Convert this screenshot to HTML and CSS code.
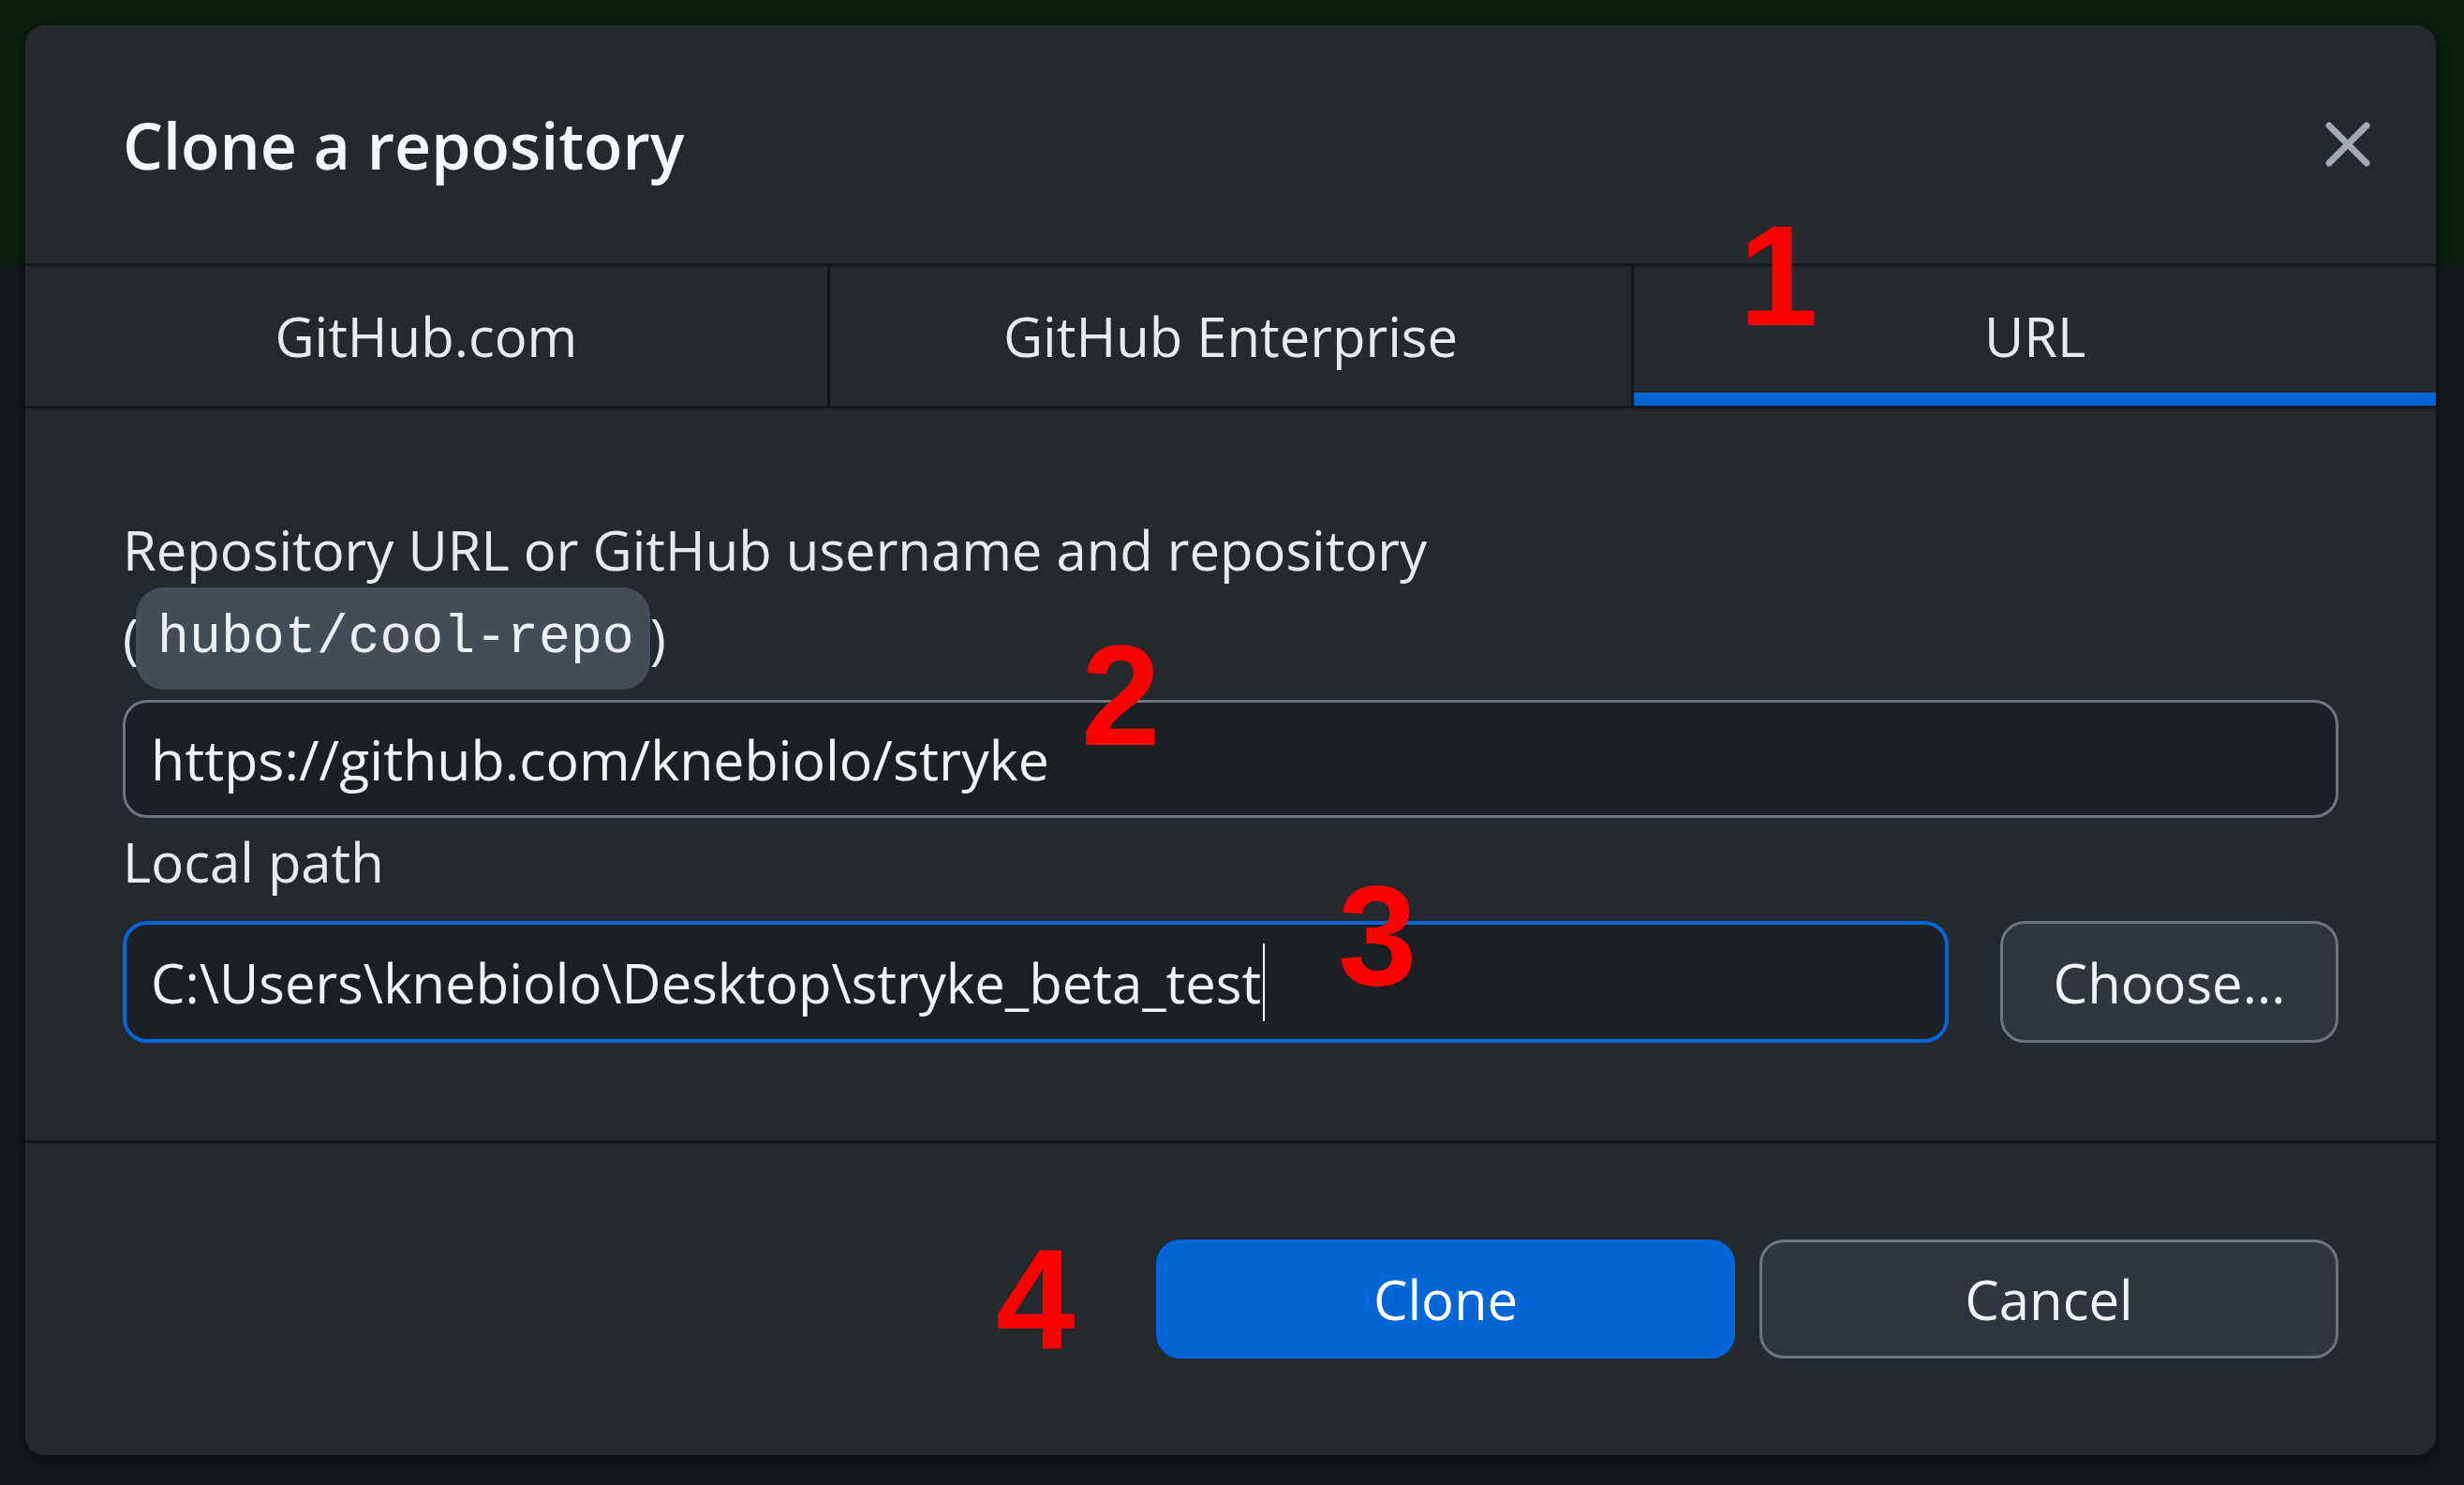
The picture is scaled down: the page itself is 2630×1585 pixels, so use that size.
FILE: index.html
```html
<!DOCTYPE html>
<html lang="en">
<head>
<meta charset="utf-8">
<title>Clone a repository</title>
<link rel="stylesheet" href="styles.css">
</head>
<body>
  <div class="dialog">
    <header class="dialog-header">
      <h1 class="dialog-title">Clone a repository</h1>
      <button class="close-btn" aria-label="Close">
        <svg viewBox="0 0 48 48" width="48" height="48" aria-hidden="true">
          <path d="M4 4 L44 44 M44 4 L4 44" stroke="#a2a9b0" stroke-width="7" stroke-linecap="round" fill="none"/>
        </svg>
      </button>
    </header>

    <nav class="tabs">
      <div class="tab">GitHub.com</div>
      <div class="tab">GitHub Enterprise</div>
      <div class="tab active">URL</div>
    </nav>

    <section class="dialog-body">
      <div class="label">Repository URL or GitHub username and repository
        <span class="hint">(<code class="code">hubot/cool-repo</code>)</span>
      </div>
      <div class="field url-field"><span class="field-text">https://github.com/knebiolo/stryke</span></div>
      <div class="label">Local path</div>
      <div class="path-row">
        <div class="field path-field"><span class="field-text">C:\Users\knebiolo\Desktop\stryke_beta_test</span><span class="caret"></span></div>
        <button class="btn choose-btn">Choose...</button>
      </div>
    </section>

    <footer class="dialog-footer">
      <button class="btn btn-primary">Clone</button>
      <button class="btn">Cancel</button>
    </footer>
  </div>

  <div class="marks">
    <span class="mark m1">1</span>
    <span class="mark m2">2</span>
    <span class="mark m3">3</span>
    <span class="mark m4">4</span>
  </div>
</body>
</html>
```

FILE: styles.css
```css
html {
  background: #16191c;
}

body {
  margin: 0;
  padding: 27px;
  box-sizing: border-box;
  min-height: 1585px;
  position: relative;
  overflow: hidden;
  font-family: "Open Sans", "Noto Sans", sans-serif;
  background: linear-gradient(to bottom, #0a1f10 0, #0a1f10 283px, #16191c 283px, #16191c 100%);
}

.dialog {
  width: 2573px;
  height: 1526px;
  background: #24292e;
  border-radius: 20px;
  box-shadow: 0 6px 22px rgba(0, 0, 0, 0.55);
  display: flex;
  flex-direction: column;
  overflow: hidden;
}

/* Header */
.dialog-header {
  flex: none;
  height: 254px;
  border-bottom: 3px solid #141619;
  display: flex;
  align-items: center;
  justify-content: space-between;
  padding: 0 70px 0 104px;
}

.dialog-title {
  margin: 0;
  font-size: 68px;
  font-weight: 600;
  color: #f6f7f8;
  white-space: nowrap;
}

.close-btn {
  width: 48px;
  height: 48px;
  padding: 0;
  border: 0;
  background: none;
  display: block;
}

.close-btn svg {
  display: block;
}

/* Tabs */
.tabs {
  flex: none;
  display: flex;
  height: 149px;
  border-bottom: 3px solid #141619;
}

.tab {
  flex: 1;
  display: flex;
  align-items: center;
  justify-content: center;
  font-size: 58px;
  color: #e8eaec;
  white-space: nowrap;
}

.tab + .tab {
  border-left: 3px solid #141619;
}

.tab.active {
  box-shadow: inset 0 -14px 0 #0366d6;
}

/* Body */
.dialog-body {
  flex: none;
  height: 784px;
  box-sizing: border-box;
  padding: 104px 104px 0 104px;
  border-bottom: 3px solid #141619;
}

.label {
  font-size: 58px;
  line-height: 94px;
  color: #e8eaec;
  white-space: nowrap;
}

.hint {
  display: flex;
  align-items: center;
  height: 94px;
}

.code {
  font-family: "Liberation Mono", "DejaVu Sans Mono", monospace;
  font-size: 56.5px;
  color: #eef0f2;
  background: #444d56;
  border-radius: 30px;
  height: 109px;
  display: flex;
  align-items: center;
  padding: 0 17px 0 23px;
  margin-left: -3px;
}

.field {
  box-sizing: border-box;
  display: flex;
  align-items: center;
  background: #1c1f23;
  border: 3px solid #6d757d;
  border-radius: 26px;
  font-size: 58px;
  color: #f2f3f4;
  white-space: nowrap;
}

.url-field {
  height: 126px;
  margin-top: 19px;
  padding: 0 27px;
}

.url-field .field-text {
  font-size: 59px;
}

.path-row {
  display: flex;
  gap: 55px;
  height: 130px;
  margin-top: 16px;
}

.path-field {
  flex: 1;
  height: 130px;
  border: 4px solid #0366d6;
  padding: 0 26px;
}

.caret {
  display: block;
  width: 2px;
  height: 83px;
  background: #ffffff;
  margin-left: 2px;
}

.btn {
  font-family: "Open Sans", "Noto Sans", sans-serif;
  font-size: 58px;
  color: #f2f3f4;
  background: #2f363d;
  border: 3px solid #6d757d;
  border-radius: 26px;
  box-sizing: border-box;
  padding: 0;
  white-space: nowrap;
}

.choose-btn {
  width: 361px;
  height: 130px;
  flex: none;
}

/* Footer */
.dialog-footer {
  flex: 1;
  display: flex;
  justify-content: flex-end;
  align-items: center;
  gap: 26px;
  padding: 0 104px;
}

.dialog-footer .btn {
  width: 618px;
  height: 127px;
}

.btn-primary {
  background: #0366d6;
  border-color: #0366d6;
  color: #ffffff;
}

/* Red annotation numbers */
.mark {
  position: absolute;
  font-family: "Liberation Sans", Arial, sans-serif;
  font-weight: 700;
  font-size: 152px;
  line-height: 1;
  color: #ff0000;
}

.m1 { left: 1856px; top: 218px; }
.m2 { left: 1154px; top: 666px; }
.m3 { left: 1428px; top: 922px; }
.m4 { left: 1063px; top: 1310px; }
```
